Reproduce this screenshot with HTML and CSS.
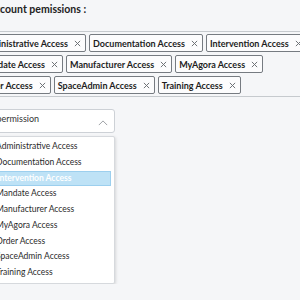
FILE: index.html
```html
<!DOCTYPE html>
<html lang="en">
<head>
    <meta charset="UTF-8">
    <title>Account permissions</title>
    <link rel="stylesheet" href="styles.css">
</head>
<body>
    <div class="panel">
        <div class="title">Account pemissions :</div>

        <div class="tagbox">
            <span class="tag">Administrative Access <svg class="x" viewBox="0 0 8 8"><path d="M1 1L7 7M7 1L1 7"/></svg></span>
            <span class="tag">Documentation Access <svg class="x" viewBox="0 0 8 8"><path d="M1 1L7 7M7 1L1 7"/></svg></span>
            <span class="tag">Intervention Access <svg class="x" viewBox="0 0 8 8"><path d="M1 1L7 7M7 1L1 7"/></svg></span>
            <span class="tag">Mandate Access <svg class="x" viewBox="0 0 8 8"><path d="M1 1L7 7M7 1L1 7"/></svg></span>
            <span class="tag">Manufacturer Access <svg class="x" viewBox="0 0 8 8"><path d="M1 1L7 7M7 1L1 7"/></svg></span>
            <span class="tag">MyAgora Access <svg class="x" viewBox="0 0 8 8"><path d="M1 1L7 7M7 1L1 7"/></svg></span>
            <span class="tag">Order Access <svg class="x" viewBox="0 0 8 8"><path d="M1 1L7 7M7 1L1 7"/></svg></span>
            <span class="tag">SpaceAdmin Access <svg class="x" viewBox="0 0 8 8"><path d="M1 1L7 7M7 1L1 7"/></svg></span>
            <span class="tag">Training Access <svg class="x" viewBox="0 0 8 8"><path d="M1 1L7 7M7 1L1 7"/></svg></span>
        </div>

        <div class="select">
            <span class="placeholder">Add permission</span>
            <svg class="caret" viewBox="0 0 12 7"><path d="M1 6L6 1L11 6"/></svg>
        </div>
        <ul class="options">
            <li>Administrative Access</li>
            <li>Documentation Access</li>
            <li class="active">Intervention Access</li>
            <li>Mandate Access</li>
            <li>Manufacturer Access</li>
            <li>MyAgora Access</li>
            <li>Order Access</li>
            <li>SpaceAdmin Access</li>
            <li>Training Access</li>
        </ul>
    </div>
</body>
</html>
```

FILE: styles.css
```css
body{
    margin: 0;
    background-color: #f5f6f8;
    overflow: hidden;
    font-family: "Lato", "Liberation Sans", sans-serif;
    color: #222;
}
div.panel{
    margin-left: -12px;
    width: 340px;
}
div.panel div.title{
    font-size: 10.5px;
    font-weight: bold;
    line-height: 16px;
    padding-top: 1px;
    height: 30px;
}
div.panel div.tagbox{
    margin-left: -12px;
    border-top: 1px solid #c6cace;
    border-bottom: 1px solid #c6cace;
    padding: 2px 0;
    display: flex;
    flex-wrap: wrap;
    gap: 3px;
    width: 360px;
}
div.tagbox span.tag{
    display: flex;
    align-items: center;
    gap: 6px;
    height: 16px;
    padding: 0 4px 0 3px;
    border: 1px solid #767b81;
    border-radius: 2px;
    background-color: #fcfcfd;
    font-size: 9px;
    font-weight: bold;
    color: #1e1e1e;
    white-space: nowrap;
}
div.tagbox svg.x{
    width: 7px;
    height: 7px;
    stroke: #6a6e73;
    stroke-width: 1.1;
    fill: none;
}
div.panel div.select{
    margin-top: 12px;
    height: 24px;
    border: 1px solid #cdd1d6;
    border-radius: 3px;
    background-color: #fff;
    display: flex;
    align-items: center;
    justify-content: space-between;
    padding: 0 6px 0 7px;
    box-sizing: border-box;
    width: 127px;
}
div.select span.placeholder{
    font-size: 9px;
    color: #333;
    margin-left: -18px;
    margin-top: -5px;
}
div.select svg.caret{
    width: 10px;
    height: 6px;
    stroke: #8a8e93;
    stroke-width: 1;
    fill: none;
    margin-top: 3px;
}
ul.options{
    list-style: none;
    margin: 3px 0 0 0;
    padding: 2px 3px 2px 0;
    width: 127px;
    box-sizing: border-box;
    background-color: #fff;
    border: 1px solid #d6d9dd;
    border-radius: 2px;
    box-shadow: 1px 1px 3px rgba(0,0,0,0.12);
}
ul.options li{
    height: 15.75px;
    line-height: 15.75px;
    font-size: 8.5px;
    color: #2a2a2a;
    padding-left: 7px;
    box-sizing: border-box;
    white-space: nowrap;
}
ul.options li.active{
    background-color: #bee2f6;
    border: 1px solid #9ccfee;
    line-height: 13.75px;
    color: #fff;
    font-weight: bold;
}
```
